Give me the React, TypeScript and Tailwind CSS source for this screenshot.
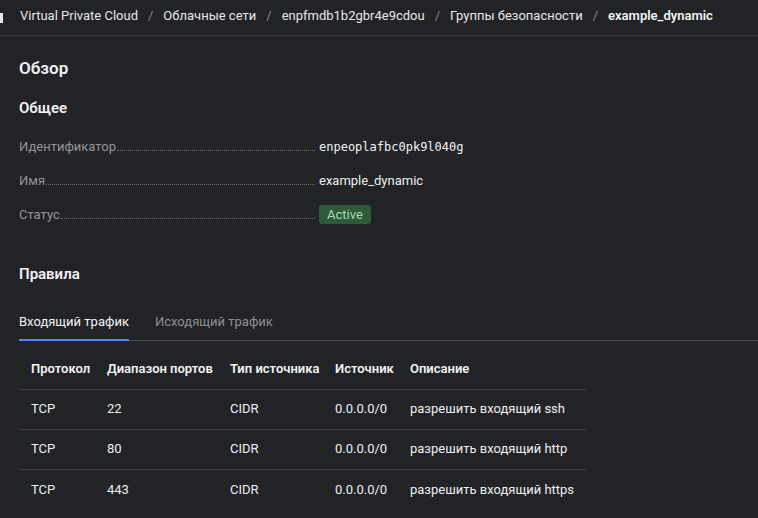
import React from "react";

const font = { fontFamily: "Roboto, 'Liberation Sans', sans-serif" };

function Crumb({ children, bold }: { children: React.ReactNode; bold?: boolean }) {
  return (
    <span className={"whitespace-nowrap shrink-0 " + (bold ? "font-semibold text-[#f2f2f3]" : "text-[#e6e6e8]")}>
      {children}
    </span>
  );
}

function Sep() {
  return <span className="text-[#8a8b8f] mx-[10px] shrink-0">/</span>;
}

function Row({ label, children }: { label: string; children: React.ReactNode }) {
  return (
    <div className="flex items-baseline h-[34px]">
      <div className="w-[300px] flex items-baseline shrink-0">
        <span className="text-[#939498] text-[13px]">{label}</span>
        <span className="flex-1 border-b border-dotted border-[#6b6c70] ml-[1px] mr-[4px]" />
      </div>
      <div className="text-[13px] text-[#eeeef0]">{children}</div>
    </div>
  );
}

const rows = [
  ["TCP", "22", "CIDR", "0.0.0.0/0", "разрешить входящий ssh"],
  ["TCP", "80", "CIDR", "0.0.0.0/0", "разрешить входящий http"],
  ["TCP", "443", "CIDR", "0.0.0.0/0", "разрешить входящий https"],
];

const cols = "grid grid-cols-[88px_123px_105px_75px_184px]";

export default function App() {
  return (
    <div className="w-[758px] h-[518px] bg-[#222327] overflow-hidden text-[#eeeef0]" style={font}>
      <div className="h-[36px] border-b border-[#3d3e42] flex items-center whitespace-nowrap">
        <div className="w-[3px] h-[10px] bg-[#e6e6e8] shrink-0" />
        <div className="ml-[17px] text-[13px] flex items-center pb-[3px] shrink-0">
          <Crumb>Virtual Private Cloud</Crumb>
          <Sep />
          <Crumb>Облачные сети</Crumb>
          <Sep />
          <Crumb>enpfmdb1b2gbr4e9cdou</Crumb>
          <Sep />
          <Crumb>Группы безопасности</Crumb>
          <Sep />
          <Crumb bold>example_dynamic</Crumb>
        </div>
      </div>

      <div className="pl-[19px]">
        <div className="text-[17px] font-semibold mt-[21px] leading-[22px] text-[#f2f2f3]">Обзор</div>
        <div className="text-[15px] font-semibold mt-[19px] leading-[20px] text-[#f2f2f3]">Общее</div>

        <div className="mt-[19px]">
          <Row label="Идентификатор">
            <span className="text-[12px] text-[#f2f2f3]" style={{ fontFamily: "'DejaVu Sans Mono', monospace" }}>
              enpeoplafbc0pk9l040g
            </span>
          </Row>
          <Row label="Имя">example_dynamic</Row>
          <Row label="Статус">
            <span className="inline-block bg-[#2f5a37] text-[#9fdfaa] text-[13px] leading-[19px] px-[8px] rounded-[3px]">
              Active
            </span>
          </Row>
        </div>

        <div className="text-[15px] font-semibold mt-[25px] leading-[20px] text-[#f2f2f3]">Правила</div>

        <div className="mt-[28px] flex gap-[26px] text-[13px] border-b border-[#4a4b4f]">
          <div className="pb-[7px] text-[#f2f2f3] border-b-2 border-[#5282ff] -mb-[1px]">Входящий трафик</div>
          <div className="pb-[7px] text-[#8e8f93]">Исходящий трафик</div>
        </div>

        <div className="mt-[9px] w-[567px] text-[13px]">
          <div className={`${cols} h-[40px] items-center font-semibold text-[#f2f2f3] border-b border-[#414246]`}>
            <div className="pl-[12px]">Протокол</div>
            <div>Диапазон портов</div>
            <div>Тип источника</div>
            <div>Источник</div>
            <div>Описание</div>
          </div>
          {rows.map((r, i) => (
            <div
              key={i}
              className={`${cols} h-[40px] items-center text-[#eeeef0] ${i < rows.length - 1 ? "border-b border-[#414246]" : ""}`}
            >
              <div className="pl-[12px]">{r[0]}</div>
              <div>{r[1]}</div>
              <div>{r[2]}</div>
              <div>{r[3]}</div>
              <div>{r[4]}</div>
            </div>
          ))}
        </div>
      </div>
    </div>
  );
}
